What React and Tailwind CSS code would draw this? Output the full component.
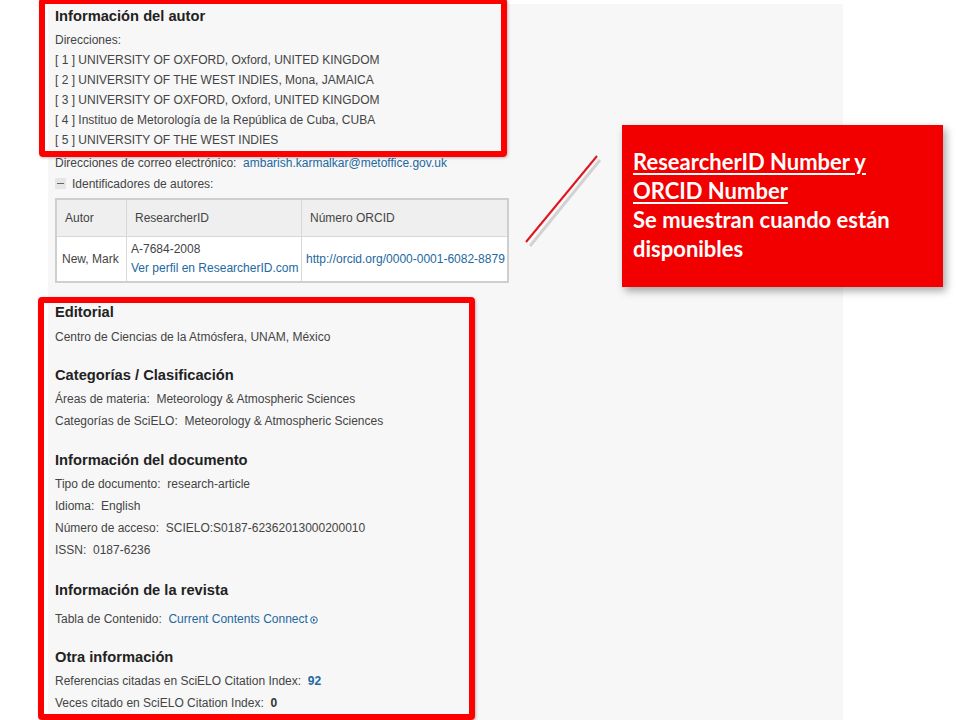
import React from "react";

const font = { fontFamily: '"Liberation Sans", Arial, sans-serif' };

function Heading({ children, className = "" }) {
  return (
    <div className={"h-[24px] leading-[24px] text-[14.7px] font-bold text-[#222] whitespace-nowrap " + className}>
      {children}
    </div>
  );
}

function Line({ children, className = "" }) {
  return (
    <div className={"h-[22px] leading-[24px] text-[12px] text-[#444] whitespace-nowrap " + className}>
      {children}
    </div>
  );
}

function Addr({ children }) {
  return <div className="h-[20px] leading-[20px] text-[12px] text-[#444] whitespace-nowrap">{children}</div>;
}

export default function App() {
  return (
    <div className="relative w-[960px] h-[720px] overflow-hidden bg-white" style={font}>
      <div className="ml-[48px] pt-[4px]">
        <div className="w-[795px] h-[716px] bg-[#f7f7f7] pl-[7px]">
          <Heading>Información del autor</Heading>
          <div className="pt-[2px]">
            <Addr>Direcciones:</Addr>
            <Addr>[ 1 ] UNIVERSITY OF OXFORD, Oxford, UNITED KINGDOM</Addr>
            <Addr>[ 2 ] UNIVERSITY OF THE WEST INDIES, Mona, JAMAICA</Addr>
            <Addr>[ 3 ] UNIVERSITY OF OXFORD, Oxford, UNITED KINGDOM</Addr>
            <Addr>[ 4 ] Instituo de Metorología de la República de Cuba, CUBA</Addr>
            <Addr>[ 5 ] UNIVERSITY OF THE WEST INDIES</Addr>
          </div>
          <div className="mt-[3px]">
            <Addr>
              Direcciones de correo electrónico:&nbsp;&nbsp;
              <span className="text-[#2468a0]">ambarish.karmalkar@metoffice.gov.uk</span>
            </Addr>
            <div className="h-[21px] flex items-center gap-[6px] text-[12px] text-[#444]">
              <span className="w-[11px] h-[11px] bg-[#e6e6e6] flex items-center justify-center">
                <span className="block w-[7px] h-[1px] bg-[#666]"></span>
              </span>
              <span>Identificadores de autores:</span>
            </div>
          </div>
          <div className="mt-[4px] w-[454px] border-2 border-[#cfcfcf] text-[12px] text-[#444]">
            <div className="flex h-[36px] bg-[#efefef] items-center">
              <div className="w-[70px] h-full flex items-center pl-[8px] border-r border-[#d8d8d8]">Autor</div>
              <div className="w-[175px] h-full flex items-center pl-[8px] border-r border-[#d8d8d8]">ResearcherID</div>
              <div className="flex-1 h-full flex items-center pl-[8px]">Número ORCID</div>
            </div>
            <div className="flex h-[45px] bg-white border-t border-[#d8d8d8]">
              <div className="w-[70px] h-full flex items-center pl-[5px] border-r border-[#d8d8d8]">New, Mark</div>
              <div className="w-[175px] h-full flex flex-col justify-center pl-[4px] border-r border-[#d8d8d8] leading-[19px]">
                <span>A-7684-2008</span>
                <span className="text-[#2468a0]">Ver perfil en ResearcherID.com</span>
              </div>
              <div className="flex-1 h-full flex items-center pl-[4px] text-[#2468a0]">
                http://orcid.org/0000-0001-6082-8879
              </div>
            </div>
          </div>

          <Heading className="mt-[17px]">Editorial</Heading>
          <Line className="mt-[1px]">Centro de Ciencias de la Atmósfera, UNAM, México</Line>

          <Heading className="mt-[16px]">Categorías / Clasificación</Heading>
          <Line>Áreas de materia:&nbsp;&nbsp;Meteorology &amp; Atmospheric Sciences</Line>
          <Line>Categorías de SciELO:&nbsp;&nbsp;Meteorology &amp; Atmospheric Sciences</Line>

          <Heading className="mt-[17px]">Información del documento</Heading>
          <Line>Tipo de documento:&nbsp;&nbsp;research-article</Line>
          <Line>Idioma:&nbsp;&nbsp;English</Line>
          <Line>Número de acceso:&nbsp;&nbsp;SCIELO:S0187-62362013000200010</Line>
          <Line>ISSN:&nbsp;&nbsp;0187-6236</Line>

          <Heading className="mt-[18px]">Información de la revista</Heading>
          <Line className="mt-[5px]">
            Tabla de Contenido:&nbsp;&nbsp;
            <span className="text-[#2468a0]">Current Contents Connect</span>
            <svg className="inline-block ml-[2px] align-middle" width="8" height="8" viewBox="0 0 8 8">
              <circle cx="4" cy="4" r="3.3" fill="none" stroke="#2468a0" strokeWidth="1" />
              <path d="M3 2.3 L5.4 4 L3 5.7 Z" fill="#2468a0" />
            </svg>
          </Line>

          <Heading className="mt-[16px]">Otra información</Heading>
          <Line>
            Referencias citadas en SciELO Citation Index:&nbsp;&nbsp;
            <span className="font-bold text-[#2468a0]">92</span>
          </Line>
          <Line>
            Veces citado en SciELO Citation Index:&nbsp;&nbsp;
            <span className="font-bold text-[#333]">0</span>
          </Line>
        </div>
      </div>

      {/* annotation boxes */}
      <div className="absolute left-[39px] top-[-2px] w-[468px] h-[159px] border-[6px] border-[#ff0000] rounded-[4px] shadow-[1px_1px_3px_rgba(0,0,0,0.25)]"></div>
      <div className="absolute left-[38px] top-[297px] w-[437px] h-[423px] border-[6px] border-[#ff0000] rounded-[4px] shadow-[1px_1px_3px_rgba(0,0,0,0.25)]"></div>

      <svg className="absolute left-[520px] top-[150px]" width="84" height="100" viewBox="0 0 84 100">
        <line x1="8" y1="93" x2="78" y2="7" stroke="rgba(0,0,0,0.15)" strokeWidth="3" transform="translate(2,3)" />
        <line x1="6" y1="92" x2="77" y2="6" stroke="#e0141e" strokeWidth="2" />
      </svg>

      <div
        className="absolute left-[622px] top-[125px] w-[321px] h-[162px] bg-[#f20000] shadow-[3px_4px_8px_rgba(0,0,0,0.35)] pl-[11px] pt-[22px] text-white font-bold text-[22px] leading-[29px] whitespace-nowrap"
        style={{ fontFamily: 'Lato, "Open Sans", sans-serif' }}
      >
        <div className="underline underline-offset-[3px] decoration-[2px]">ResearcherID Number y</div>
        <div className="underline underline-offset-[3px] decoration-[2px]">ORCID Number</div>
        <div>Se muestran cuando están</div>
        <div>disponibles</div>
      </div>
    </div>
  );
}
